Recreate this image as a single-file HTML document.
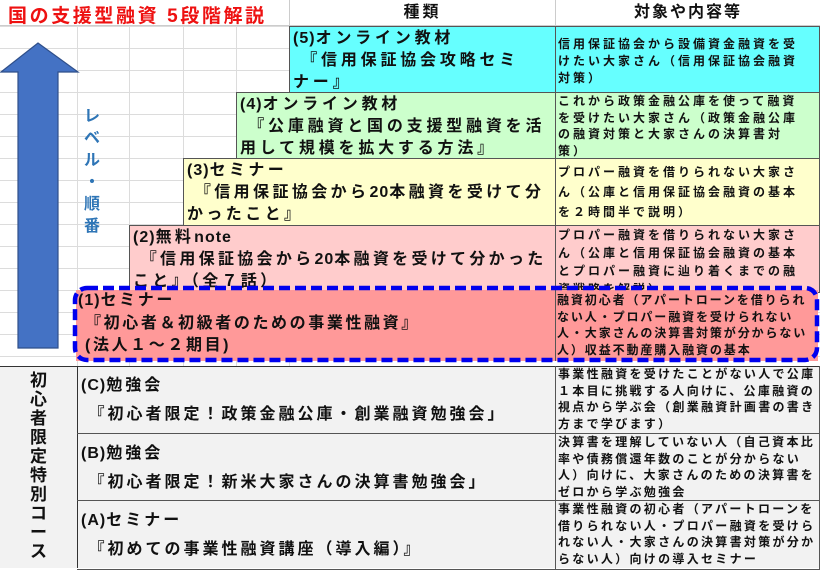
<!DOCTYPE html>
<html><head><meta charset="utf-8"><style>
*{margin:0;padding:0;box-sizing:border-box}
body{width:820px;height:568px;overflow:hidden;background:#fff;position:relative;font-family:"Liberation Sans","Noto Sans CJK JP",sans-serif;font-weight:bold;color:#111}
.grid{position:absolute;left:0;top:26px;width:820px;height:340px;
background-image:linear-gradient(#dcdcdc 1px,transparent 1px);background-size:100% 22px}
.v{position:absolute;top:26px;height:340px;width:1px;background:#dcdcdc}
.c{position:absolute;border:1px solid #555;overflow:hidden;white-space:nowrap}
.l{font-size:16px;letter-spacing:3.8px;line-height:22px;padding:1px 0 0 3px}
.r{font-size:12px;letter-spacing:3px;line-height:16.5px;padding:0 0 0 2px}
.b{font-size:16px;letter-spacing:3px;line-height:29px;padding:5px 0 0 4px}
.br{font-size:12px;letter-spacing:2.3px;line-height:16.6px;padding:0 0 0 2px}
.n{letter-spacing:1px}
</style></head><body>
<div class="grid"></div>
<div class="v" style="left:77px"></div><div class="v" style="left:129px"></div><div class="v" style="left:183px"></div><div class="v" style="left:236px"></div><div class="v" style="left:289px"></div>
<div style="position:absolute;left:0;top:0;width:820px;height:26px;background:#fff;border-bottom:1px solid #ccc"></div>
<div style="position:absolute;left:8px;top:1px;font-size:19px;color:#ee1111;letter-spacing:2.6px;white-space:nowrap">国の支援型融資 5段階解説</div>
<div style="position:absolute;left:289px;top:0;width:266px;height:26px;border-left:1px solid #ccc;text-align:center;font-size:16px;line-height:26px;letter-spacing:3px">種類</div>
<div style="position:absolute;left:555px;top:0;width:265px;height:26px;border-left:1px solid #ccc;text-align:center;font-size:16px;line-height:26px;letter-spacing:2px">対象や内容等</div>

<svg style="position:absolute;left:0;top:40px" width="82" height="312"><path d="M18,308 L18,32 L1,32 L38,3 L78,32 L58,32 L58,308 Z" fill="#4472c4" stroke="#2f4f8a" stroke-width="1.2"/></svg>
<div style="position:absolute;left:82px;top:106px;width:20px;font-size:16px;line-height:22px;color:#2e75b6;text-align:center">レ<br>ベ<br>ル<br>・<br>順<br>番</div>

<div class="c l" style="left:289px;top:26px;width:267px;height:67px;background:#66ffff"><span class="n">(5)</span>オンライン教材<br>&nbsp;『信用保証協会攻略セミ<br>ナー』</div>
<div class="c r" style="left:555px;top:26px;width:265px;height:67px;background:#66ffff;padding-top:9px;line-height:17px">信用保証協会から設備資金融資を受<br>けたい大家さん（信用保証協会融資<br>対策）</div>
<div class="c l" style="left:236px;top:92px;width:320px;height:67px;background:#ccffcc"><span class="n">(4)</span>オンライン教材<br>&nbsp;『公庫融資と国の支援型融資を活<br>用して規模を拡大する方法』</div>
<div class="c r" style="left:555px;top:92px;width:265px;height:67px;background:#ccffcc">これから政策金融公庫を使って融資<br>を受けたい大家さん（政策金融公庫<br>の融資対策と大家さんの決算書対<br>策）</div>
<div class="c l" style="left:183px;top:158px;width:373px;height:68px;background:#ffffcc;letter-spacing:3.4px"><span class="n">(3)</span>セミナー<br>&nbsp;『信用保証協会から<span class="n">20</span>本融資を受けて分<br>かったこと』</div>
<div class="c r" style="left:555px;top:158px;width:265px;height:68px;background:#ffffcc;padding-top:3px;line-height:20px">プロパー融資を借りられない大家さ<br>ん（公庫と信用保証協会融資の基本<br>を２時間半で説明）</div>
<div class="c l" style="left:129px;top:225px;width:427px;height:68px;background:#ffcccc;letter-spacing:3.3px"><span class="n">(2)</span>無料<span class="n">note</span><br>&nbsp;『信用保証協会から<span class="n">20</span>本融資を受けて分かった<br>こと』（全７話）</div>
<div class="c r" style="left:555px;top:225px;width:265px;height:68px;background:#ffcccc;line-height:18px;padding-top:0">プロパー融資を借りられない大家さ<br>ん（公庫と信用保証協会融資の基本<br>とプロパー融資に辿り着くまでの融<br>資戦略を解説）</div>

<div style="position:absolute;left:76px;top:290px;width:742px;height:71px;background:#ff9999"></div>
<div style="position:absolute;left:555px;top:290px;width:1px;height:71px;background:#555"></div>
<div style="position:absolute;left:78px;top:290px;width:470px;font-size:16px;letter-spacing:2.6px;line-height:22.5px;white-space:nowrap"><span class="n">(1)</span>セミナー<br>&nbsp;『初心者＆初級者のための事業性融資』<br>&nbsp;(法人１～２期目)</div>
<div style="position:absolute;left:557px;top:292px;width:262px;font-size:12px;letter-spacing:1.9px;line-height:16.5px;white-space:nowrap">融資初心者（アパートローンを借りられ<br>ない人・プロパー融資を受けられない<br>人・大家さんの決算書対策が分からない<br>人）収益不動産購入融資の基本</div>
<svg style="position:absolute;left:72px;top:285px" width="750" height="80"><rect x="3" y="3" width="742" height="72" rx="12" fill="none" stroke="#0000ee" stroke-width="4.5" stroke-dasharray="11 5"/></svg>

<div style="position:absolute;left:0;top:366px;width:820px;height:202px;background:#f2f2f2;border-top:1.5px solid #333"></div>
<div style="position:absolute;left:77px;top:366px;width:1px;height:202px;background:#333"></div>
<div style="position:absolute;left:0;top:371px;width:77px;text-align:center;font-size:17px;line-height:19px">初<br>心<br>者<br>限<br>定<br>特<br>別<br>コ<br>ー<br>ス</div>
<div class="c b" style="left:77px;top:366px;width:479px;height:68px;border-left:none;border-top:none"><span class="n">(C)</span>勉強会<br>&nbsp;『初心者限定！政策金融公庫・創業融資勉強会」</div>
<div class="c br" style="left:555px;top:366px;width:265px;height:68px;border-top:none">事業性融資を受けたことがない人で公庫<br>１本目に挑戦する人向けに、公庫融資の<br>視点から学ぶ会（創業融資計画書の書き<br>方まで学びます）</div>
<div class="c b" style="left:77px;top:433px;width:479px;height:68px;border-left:none"><span class="n">(B)</span>勉強会<br>&nbsp;『初心者限定！新米大家さんの決算書勉強会」</div>
<div class="c br" style="left:555px;top:433px;width:265px;height:68px">決算書を理解していない人（自己資本比<br>率や債務償還年数のことが分からない<br>人）向けに、大家さんのための決算書を<br>ゼロから学ぶ勉強会</div>
<div class="c b" style="left:77px;top:500px;width:479px;height:70px;border-left:none"><span class="n">(A)</span>セミナー<br>&nbsp;『初めての事業性融資講座（導入編）』</div>
<div class="c br" style="left:555px;top:500px;width:265px;height:70px">事業性融資の初心者（アパートローンを<br>借りられない人・プロパー融資を受けら<br>れない人・大家さんの決算書対策が分か<br>らない人）向けの導入セミナー</div>
</body></html>
